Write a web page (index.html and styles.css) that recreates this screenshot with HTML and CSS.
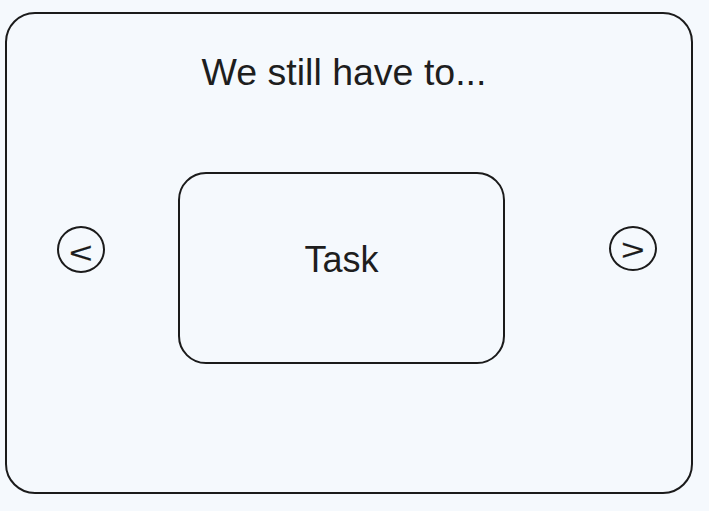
FILE: index.html
```html
<!DOCTYPE html>
<html lang="en">
<head>
  <meta charset="UTF-8">
  <meta name="viewport" content="width=device-width, initial-scale=1.0">
  <title>Task carousel</title>
  <link rel="stylesheet" href="styles.css">
</head>
<body>
  <div class="frame">
    <h1 class="title">We still have to...</h1>

    <div class="carousel">
      <button class="nav nav-prev"><span>&lt;</span></button>
      <div class="task-card">Task</div>
      <button class="nav nav-next"><span>&gt;</span></button>
    </div>
  </div>
</body>
</html>
```

FILE: styles.css
```css
body {
  margin: 0;
  font-family: 'Liberation Sans', Arial, sans-serif;
  background-color: #f5f9fd;
  color: #1e1e1e;
}
.frame {
  box-sizing: border-box;
  width: 688px;
  height: 482px;
  margin: 12px 0 0 5px;
  padding-top: 38px;
  border: 2px solid #1b1b1b;
  border-radius: 30px;
}
.title {
  margin: 0 0 80px;
  padding-right: 10px;
  font-size: 37.5px;
  font-weight: normal;
  line-height: 40px;
  text-align: center;
}
.carousel {
  display: flex;
  align-items: flex-start;
  padding-left: 50px;
}
.nav {
  box-sizing: border-box;
  display: flex;
  align-items: center;
  justify-content: center;
  width: 48px;
  height: 47px;
  margin-top: 54px;
  padding: 6px 0 0;
  border: 2px solid #1b1b1b;
  border-radius: 50%;
  background: none;
  color: #1b1b1b;
  font-family: 'Liberation Sans', Arial, sans-serif;
  font-size: 30px;
  line-height: 1;
  -webkit-text-stroke: 0.2px #1b1b1b;
}
.nav span {
  display: block;
  transform: scaleX(1.35);
}
.nav-next {
  height: 45px;
  margin-left: 104px;
  padding-top: 2px;
}
.task-card {
  box-sizing: border-box;
  display: flex;
  justify-content: center;
  width: 327px;
  height: 192px;
  margin-left: 73px;
  padding-top: 66px;
  border: 2px solid #1b1b1b;
  border-radius: 28px;
  font-size: 36px;
  line-height: 40px;
}
```
